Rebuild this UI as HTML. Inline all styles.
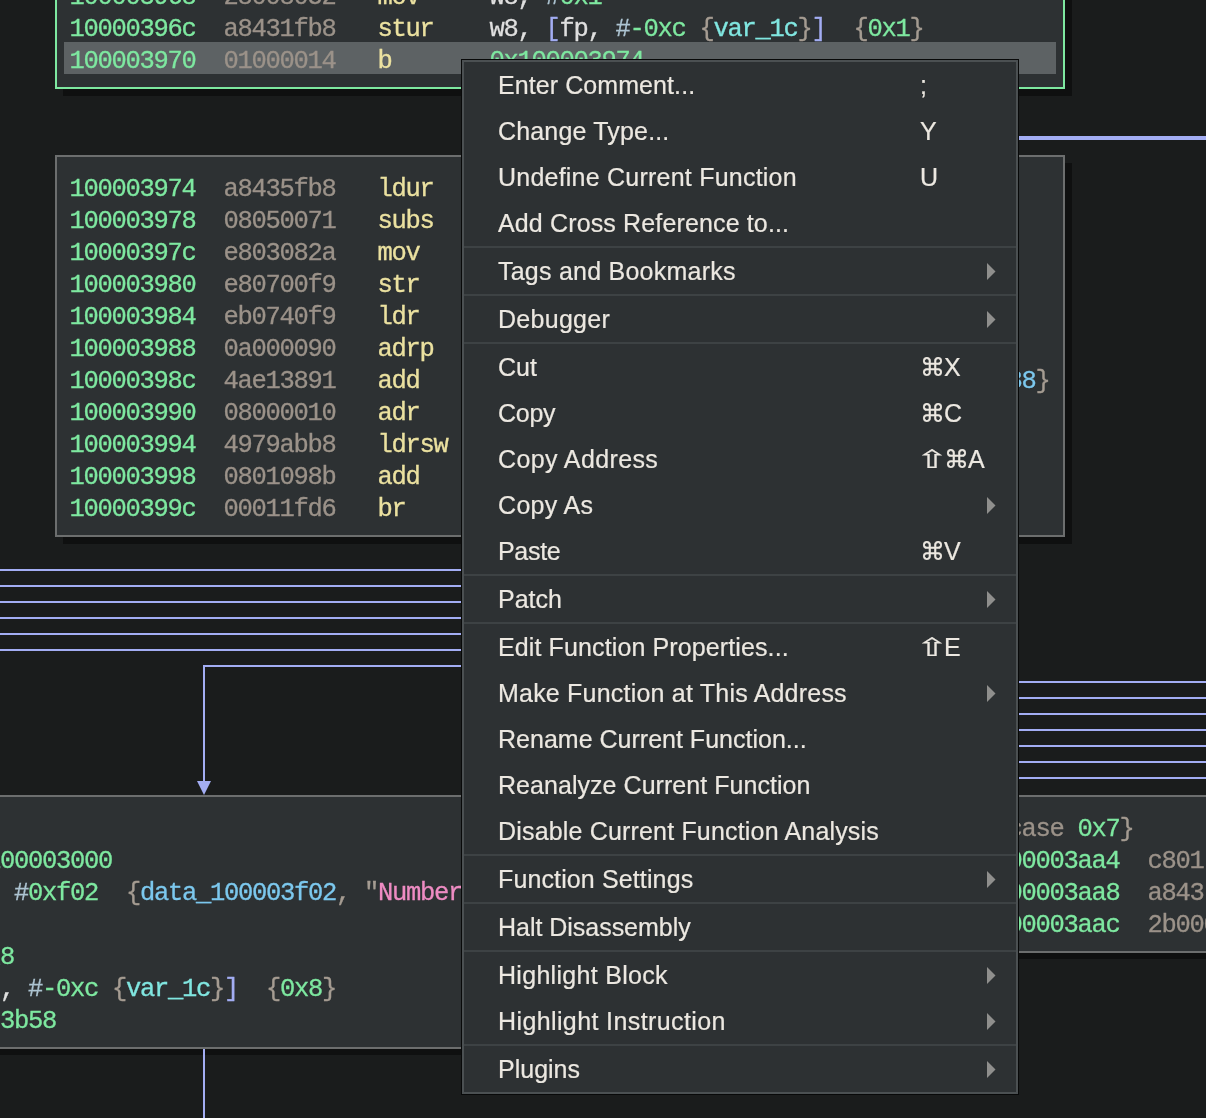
<!DOCTYPE html>
<html lang="en"><head><meta charset="utf-8"><title>Binary Ninja</title>
<style>
*{margin:0;padding:0;box-sizing:border-box}
html,body{width:1206px;height:1118px;overflow:hidden;background:#1a1c1c}
#root{will-change:transform;position:relative;width:1206px;height:1118px;overflow:hidden;background:#1a1c1c}
.node{position:absolute;z-index:2;background:#2d3133;border:2px solid #6c6e6e}
.shadow{position:absolute;z-index:0;background:#0f1010}
.hl{position:absolute;z-index:2;background:#5d6264}
.e{position:absolute;z-index:1;background:#a3adf3}
.ah{position:absolute;z-index:1}
.m{position:absolute;z-index:2;font-family:"Liberation Mono",monospace;font-size:25.5px;letter-spacing:-1.3025px;line-height:32px;height:32px;white-space:pre;padding-top:2.5px;-webkit-text-stroke:0.3px currentColor}
#menu{position:absolute;z-index:3;left:461px;top:59px;width:558px;box-sizing:content-box;width:552px;border:2px solid #4b5052;outline:1px solid #080909;background:#2d3133;left:462px;top:60px;overflow:hidden}
.mi{position:absolute;left:0;width:552px;height:46px;font-family:"Liberation Sans","DejaVu Sans",sans-serif;font-size:25px;color:#ece8e1;white-space:pre;-webkit-text-stroke:0.2px currentColor}
.lb{position:absolute;left:34px;top:0;line-height:46px;padding-top:0px}
.sc{position:absolute;left:456px;top:0;line-height:46px;padding-top:0px;letter-spacing:-1px}
.sh{display:inline-block;width:24px;text-align:center;letter-spacing:0;transform:scaleX(1.6)}
.ar{position:absolute;left:523px;top:14.5px;fill:#8f8f8d}
.sep{position:absolute;left:0;width:552px;height:2px;background:#3d4244}
</style></head>
<body><div id="root">
<div class="e" style="left:1010px;top:136px;width:196px;height:4px"></div><div class="e" style="left:0px;top:569px;width:470px;height:2px"></div><div class="e" style="left:0px;top:585px;width:470px;height:2px"></div><div class="e" style="left:0px;top:601px;width:470px;height:2px"></div><div class="e" style="left:0px;top:617px;width:470px;height:2px"></div><div class="e" style="left:0px;top:633px;width:470px;height:2px"></div><div class="e" style="left:0px;top:649px;width:470px;height:2px"></div><div class="e" style="left:203px;top:665px;width:267px;height:2px"></div><div class="e" style="left:203px;top:665px;width:2px;height:117px"></div><div class="e" style="left:1010px;top:681px;width:196px;height:2px"></div><div class="e" style="left:1010px;top:697px;width:196px;height:2px"></div><div class="e" style="left:1010px;top:713px;width:196px;height:2px"></div><div class="e" style="left:1010px;top:729px;width:196px;height:2px"></div><div class="e" style="left:1010px;top:745px;width:196px;height:2px"></div><div class="e" style="left:1010px;top:761px;width:196px;height:2px"></div><div class="e" style="left:1010px;top:777px;width:196px;height:2px"></div><div class="e" style="left:203px;top:1047px;width:2px;height:71px"></div><svg class="ah" style="left:196px;top:780px" width="16" height="16" viewBox="0 0 16 16"><polygon points="1,1 15,1 8,15" fill="#a3adf3"/></svg>
<div class="shadow" style="left:63px;top:-40px;width:1009px;height:136px"></div>
<div class="node" style="left:55px;top:-60px;width:1010px;height:148.5px;border-color:#7ee8a0"></div>
<div class="hl" style="left:64px;top:42px;width:992px;height:32px"></div><span class="m" style="left:69.50px;top:-21px;color:#7ee8a0">100003968</span><span class="m" style="left:223.50px;top:-21px;color:#9b9289">28008052</span><span class="m" style="left:377.50px;top:-21px;color:#ebe1a0">mov</span><span class="m" style="left:489.50px;top:-21px;color:#dfdfdf">w8,</span><span class="m" style="left:545.50px;top:-21px;color:#adc4d2">#</span><span class="m" style="left:559.50px;top:-21px;color:#7ee8a0">0x1</span><span class="m" style="left:69.50px;top:11px;color:#7ee8a0">10000396c</span><span class="m" style="left:223.50px;top:11px;color:#9b9289">a8431fb8</span><span class="m" style="left:377.50px;top:11px;color:#ebe1a0">stur</span><span class="m" style="left:489.50px;top:11px;color:#dfdfdf">w8,</span><span class="m" style="left:545.50px;top:11px;color:#a3adf3">[</span><span class="m" style="left:559.50px;top:11px;color:#dfdfdf">fp,</span><span class="m" style="left:615.50px;top:11px;color:#adc4d2">#</span><span class="m" style="left:629.50px;top:11px;color:#7ee8a0">-0xc</span><span class="m" style="left:699.50px;top:11px;color:#a59c92">{</span><span class="m" style="left:713.50px;top:11px;color:#80e6e0">var_1c</span><span class="m" style="left:797.50px;top:11px;color:#a59c92">}</span><span class="m" style="left:811.50px;top:11px;color:#a3adf3">]</span><span class="m" style="left:853.50px;top:11px;color:#a59c92">{</span><span class="m" style="left:867.50px;top:11px;color:#7ee8a0">0x1</span><span class="m" style="left:909.50px;top:11px;color:#a59c92">}</span><span class="m" style="left:69.50px;top:43px;color:#7ee8a0">100003970</span><span class="m" style="left:223.50px;top:43px;color:#9b9289">01000014</span><span class="m" style="left:377.50px;top:43px;color:#ebe1a0">b</span><span class="m" style="left:489.50px;top:43px;color:#7ee8a0">0x100003974</span>
<div class="shadow" style="left:63px;top:163px;width:1009px;height:381px"></div>
<div class="node" style="left:55px;top:155px;width:1010px;height:382px"></div>
<span class="m" style="left:69.50px;top:171px;color:#7ee8a0">100003974</span><span class="m" style="left:223.50px;top:171px;color:#9b9289">a8435fb8</span><span class="m" style="left:377.50px;top:171px;color:#ebe1a0">ldur</span><span class="m" style="left:489.50px;top:171px;color:#dfdfdf">w8,</span><span class="m" style="left:545.50px;top:171px;color:#a3adf3">[</span><span class="m" style="left:559.50px;top:171px;color:#dfdfdf">fp,</span><span class="m" style="left:615.50px;top:171px;color:#adc4d2">#</span><span class="m" style="left:629.50px;top:171px;color:#7ee8a0">-0xc</span><span class="m" style="left:699.50px;top:171px;color:#a59c92">{</span><span class="m" style="left:713.50px;top:171px;color:#80e6e0">var_1c</span><span class="m" style="left:797.50px;top:171px;color:#a59c92">}</span><span class="m" style="left:811.50px;top:171px;color:#a3adf3">]</span><span class="m" style="left:69.50px;top:203px;color:#7ee8a0">100003978</span><span class="m" style="left:223.50px;top:203px;color:#9b9289">08050071</span><span class="m" style="left:377.50px;top:203px;color:#ebe1a0">subs</span><span class="m" style="left:489.50px;top:203px;color:#dfdfdf">w8,</span><span class="m" style="left:545.50px;top:203px;color:#dfdfdf">w8,</span><span class="m" style="left:601.50px;top:203px;color:#adc4d2">#</span><span class="m" style="left:615.50px;top:203px;color:#7ee8a0">0x1</span><span class="m" style="left:69.50px;top:235px;color:#7ee8a0">10000397c</span><span class="m" style="left:223.50px;top:235px;color:#9b9289">e803082a</span><span class="m" style="left:377.50px;top:235px;color:#ebe1a0">mov</span><span class="m" style="left:489.50px;top:235px;color:#dfdfdf">w8,</span><span class="m" style="left:545.50px;top:235px;color:#dfdfdf">w8</span><span class="m" style="left:69.50px;top:267px;color:#7ee8a0">100003980</span><span class="m" style="left:223.50px;top:267px;color:#9b9289">e80700f9</span><span class="m" style="left:377.50px;top:267px;color:#ebe1a0">str</span><span class="m" style="left:489.50px;top:267px;color:#dfdfdf">x8,</span><span class="m" style="left:545.50px;top:267px;color:#a3adf3">[</span><span class="m" style="left:559.50px;top:267px;color:#dfdfdf">sp,</span><span class="m" style="left:615.50px;top:267px;color:#adc4d2">#</span><span class="m" style="left:629.50px;top:267px;color:#7ee8a0">0x8</span><span class="m" style="left:685.50px;top:267px;color:#a59c92">{</span><span class="m" style="left:699.50px;top:267px;color:#80e6e0">var_38</span><span class="m" style="left:783.50px;top:267px;color:#a59c92">}</span><span class="m" style="left:797.50px;top:267px;color:#a3adf3">]</span><span class="m" style="left:69.50px;top:299px;color:#7ee8a0">100003984</span><span class="m" style="left:223.50px;top:299px;color:#9b9289">eb0740f9</span><span class="m" style="left:377.50px;top:299px;color:#ebe1a0">ldr</span><span class="m" style="left:489.50px;top:299px;color:#dfdfdf">x11,</span><span class="m" style="left:559.50px;top:299px;color:#a3adf3">[</span><span class="m" style="left:573.50px;top:299px;color:#dfdfdf">sp,</span><span class="m" style="left:629.50px;top:299px;color:#adc4d2">#</span><span class="m" style="left:643.50px;top:299px;color:#7ee8a0">0x8</span><span class="m" style="left:699.50px;top:299px;color:#a59c92">{</span><span class="m" style="left:713.50px;top:299px;color:#80e6e0">var_38</span><span class="m" style="left:797.50px;top:299px;color:#a59c92">}</span><span class="m" style="left:811.50px;top:299px;color:#a3adf3">]</span><span class="m" style="left:69.50px;top:331px;color:#7ee8a0">100003988</span><span class="m" style="left:223.50px;top:331px;color:#9b9289">0a000090</span><span class="m" style="left:377.50px;top:331px;color:#ebe1a0">adrp</span><span class="m" style="left:489.50px;top:331px;color:#dfdfdf">x10,</span><span class="m" style="left:559.50px;top:331px;color:#7ee8a0">0x100003000</span><span class="m" style="left:69.50px;top:363px;color:#7ee8a0">10000398c</span><span class="m" style="left:223.50px;top:363px;color:#9b9289">4ae13891</span><span class="m" style="left:377.50px;top:363px;color:#ebe1a0">add</span><span class="m" style="left:489.50px;top:363px;color:#dfdfdf">x10,</span><span class="m" style="left:559.50px;top:363px;color:#dfdfdf">x10,</span><span class="m" style="left:629.50px;top:363px;color:#adc4d2">#</span><span class="m" style="left:643.50px;top:363px;color:#7ee8a0">0xf38</span><span class="m" style="left:741.50px;top:363px;color:#a59c92">{</span><span class="m" style="left:755.50px;top:363px;color:#7cc8ee">jump_table_100003f38</span><span class="m" style="left:1035.50px;top:363px;color:#a59c92">}</span><span class="m" style="left:69.50px;top:395px;color:#7ee8a0">100003990</span><span class="m" style="left:223.50px;top:395px;color:#9b9289">08000010</span><span class="m" style="left:377.50px;top:395px;color:#ebe1a0">adr</span><span class="m" style="left:489.50px;top:395px;color:#dfdfdf">x8,</span><span class="m" style="left:545.50px;top:395px;color:#7ee8a0">0x100003990</span><span class="m" style="left:69.50px;top:427px;color:#7ee8a0">100003994</span><span class="m" style="left:223.50px;top:427px;color:#9b9289">4979abb8</span><span class="m" style="left:377.50px;top:427px;color:#ebe1a0">ldrsw</span><span class="m" style="left:489.50px;top:427px;color:#dfdfdf">x9,</span><span class="m" style="left:545.50px;top:427px;color:#a3adf3">[</span><span class="m" style="left:559.50px;top:427px;color:#dfdfdf">x10,</span><span class="m" style="left:629.50px;top:427px;color:#dfdfdf">x11,</span><span class="m" style="left:699.50px;top:427px;color:#dfdfdf">lsl</span><span class="m" style="left:755.50px;top:427px;color:#adc4d2">#</span><span class="m" style="left:769.50px;top:427px;color:#7ee8a0">0x2</span><span class="m" style="left:811.50px;top:427px;color:#a3adf3">]</span><span class="m" style="left:69.50px;top:459px;color:#7ee8a0">100003998</span><span class="m" style="left:223.50px;top:459px;color:#9b9289">0801098b</span><span class="m" style="left:377.50px;top:459px;color:#ebe1a0">add</span><span class="m" style="left:489.50px;top:459px;color:#dfdfdf">x8,</span><span class="m" style="left:545.50px;top:459px;color:#dfdfdf">x8,</span><span class="m" style="left:601.50px;top:459px;color:#dfdfdf">x9</span><span class="m" style="left:69.50px;top:491px;color:#7ee8a0">10000399c</span><span class="m" style="left:223.50px;top:491px;color:#9b9289">00011fd6</span><span class="m" style="left:377.50px;top:491px;color:#ebe1a0">br</span><span class="m" style="left:489.50px;top:491px;color:#dfdfdf">x8</span>
<div class="shadow" style="left:-20px;top:803px;width:520px;height:252px"></div>
<div class="node" style="left:-20px;top:795px;width:520px;height:254px"></div>
<span class="m" style="left:-98.05px;top:843px;color:#dfdfdf">x0,</span><span class="m" style="left:-42.05px;top:843px;color:#7ee8a0">0x100003000</span><span class="m" style="left:-98.05px;top:875px;color:#dfdfdf">x0,</span><span class="m" style="left:-42.05px;top:875px;color:#dfdfdf">x0,</span><span class="m" style="left:13.95px;top:875px;color:#adc4d2">#</span><span class="m" style="left:27.95px;top:875px;color:#7ee8a0">0xf02</span><span class="m" style="left:125.95px;top:875px;color:#a59c92">{</span><span class="m" style="left:139.95px;top:875px;color:#7cc8ee">data_100003f02</span><span class="m" style="left:335.95px;top:875px;color:#a59c92">,</span><span class="m" style="left:363.95px;top:875px;color:#a59c92">"</span><span class="m" style="left:377.95px;top:875px;color:#ee8cc3">Number is 8</span><span class="m" style="left:531.95px;top:875px;color:#a59c92">"</span><span class="m" style="left:545.95px;top:875px;color:#a59c92">}</span><span class="m" style="left:-98.05px;top:907px;color:#7cc8ee">_printf</span><span class="m" style="left:-98.05px;top:939px;color:#dfdfdf">w8,</span><span class="m" style="left:-42.05px;top:939px;color:#adc4d2">#</span><span class="m" style="left:-28.05px;top:939px;color:#7ee8a0">0x8</span><span class="m" style="left:-98.05px;top:971px;color:#dfdfdf">w8,</span><span class="m" style="left:-42.05px;top:971px;color:#a3adf3">[</span><span class="m" style="left:-28.05px;top:971px;color:#dfdfdf">fp,</span><span class="m" style="left:27.95px;top:971px;color:#adc4d2">#</span><span class="m" style="left:41.95px;top:971px;color:#7ee8a0">-0xc</span><span class="m" style="left:111.95px;top:971px;color:#a59c92">{</span><span class="m" style="left:125.95px;top:971px;color:#80e6e0">var_1c</span><span class="m" style="left:209.95px;top:971px;color:#a59c92">}</span><span class="m" style="left:223.95px;top:971px;color:#a3adf3">]</span><span class="m" style="left:265.95px;top:971px;color:#a59c92">{</span><span class="m" style="left:279.95px;top:971px;color:#7ee8a0">0x8</span><span class="m" style="left:321.95px;top:971px;color:#a59c92">}</span><span class="m" style="left:-98.05px;top:1003px;color:#7ee8a0">0x100003b58</span>
<div class="shadow" style="left:986px;top:803px;width:300px;height:156px"></div>
<div class="node" style="left:978px;top:795px;width:300px;height:158px"></div>
<span class="m" style="left:993.60px;top:811px;color:#a59c92">{</span><span class="m" style="left:1007.60px;top:811px;color:#9b9289">case</span><span class="m" style="left:1077.60px;top:811px;color:#7ee8a0">0x7</span><span class="m" style="left:1119.60px;top:811px;color:#a59c92">}</span><span class="m" style="left:993.60px;top:843px;color:#7ee8a0">100003aa4</span><span class="m" style="left:1147.60px;top:843px;color:#9b9289">c801</span><span class="m" style="left:993.60px;top:875px;color:#7ee8a0">100003aa8</span><span class="m" style="left:1147.60px;top:875px;color:#9b9289">a843</span><span class="m" style="left:993.60px;top:907px;color:#7ee8a0">100003aac</span><span class="m" style="left:1147.60px;top:907px;color:#9b9289">2b000014</span>
<div id="menu" style="height:1030px"><div class="mi" style="top:0px"><span class="lb" style="letter-spacing:0.080px">Enter Comment...</span><span class="sc">;</span></div><div class="mi" style="top:46px"><span class="lb" style="letter-spacing:0.170px">Change Type...</span><span class="sc">Y</span></div><div class="mi" style="top:92px"><span class="lb" style="letter-spacing:0.225px">Undefine Current Function</span><span class="sc">U</span></div><div class="mi" style="top:138px"><span class="lb" style="letter-spacing:0.141px">Add Cross Reference to...</span></div><div class="sep" style="top:184px"></div><div class="mi" style="top:186px"><span class="lb" style="letter-spacing:0.235px">Tags and Bookmarks</span><svg class="ar" width="9" height="17" viewBox="0 0 9 17"><polygon points="0,0 8.5,8.5 0,17"/></svg></div><div class="sep" style="top:232px"></div><div class="mi" style="top:234px"><span class="lb" style="letter-spacing:0.286px">Debugger</span><svg class="ar" width="9" height="17" viewBox="0 0 9 17"><polygon points="0,0 8.5,8.5 0,17"/></svg></div><div class="sep" style="top:280px"></div><div class="mi" style="top:282px"><span class="lb" style="letter-spacing:0.000px">Cut</span><span class="sc">⌘X</span></div><div class="mi" style="top:328px"><span class="lb" style="letter-spacing:-0.266px">Copy</span><span class="sc">⌘C</span></div><div class="mi" style="top:374px"><span class="lb" style="letter-spacing:0.382px">Copy Address</span><span class="sc"><span class="sh">⇧</span>⌘A</span></div><div class="mi" style="top:420px"><span class="lb" style="letter-spacing:0.333px">Copy As</span><svg class="ar" width="9" height="17" viewBox="0 0 9 17"><polygon points="0,0 8.5,8.5 0,17"/></svg></div><div class="mi" style="top:466px"><span class="lb" style="letter-spacing:-0.300px">Paste</span><span class="sc">⌘V</span></div><div class="sep" style="top:512px"></div><div class="mi" style="top:514px"><span class="lb" style="letter-spacing:0.000px">Patch</span><svg class="ar" width="9" height="17" viewBox="0 0 9 17"><polygon points="0,0 8.5,8.5 0,17"/></svg></div><div class="sep" style="top:560px"></div><div class="mi" style="top:562px"><span class="lb" style="letter-spacing:0.116px">Edit Function Properties...</span><span class="sc"><span class="sh">⇧</span>E</span></div><div class="mi" style="top:608px"><span class="lb" style="letter-spacing:0.208px">Make Function at This Address</span><svg class="ar" width="9" height="17" viewBox="0 0 9 17"><polygon points="0,0 8.5,8.5 0,17"/></svg></div><div class="mi" style="top:654px"><span class="lb" style="letter-spacing:0.008px">Rename Current Function...</span></div><div class="mi" style="top:700px"><span class="lb" style="letter-spacing:0.048px">Reanalyze Current Function</span></div><div class="mi" style="top:746px"><span class="lb" style="letter-spacing:0.175px">Disable Current Function Analysis</span></div><div class="sep" style="top:792px"></div><div class="mi" style="top:794px"><span class="lb" style="letter-spacing:0.125px">Function Settings</span><svg class="ar" width="9" height="17" viewBox="0 0 9 17"><polygon points="0,0 8.5,8.5 0,17"/></svg></div><div class="sep" style="top:840px"></div><div class="mi" style="top:842px"><span class="lb" style="letter-spacing:-0.027px">Halt Disassembly</span></div><div class="sep" style="top:888px"></div><div class="mi" style="top:890px"><span class="lb" style="letter-spacing:0.300px">Highlight Block</span><svg class="ar" width="9" height="17" viewBox="0 0 9 17"><polygon points="0,0 8.5,8.5 0,17"/></svg></div><div class="mi" style="top:936px"><span class="lb" style="letter-spacing:0.390px">Highlight Instruction</span><svg class="ar" width="9" height="17" viewBox="0 0 9 17"><polygon points="0,0 8.5,8.5 0,17"/></svg></div><div class="sep" style="top:982px"></div><div class="mi" style="top:984px"><span class="lb" style="letter-spacing:0.000px">Plugins</span><svg class="ar" width="9" height="17" viewBox="0 0 9 17"><polygon points="0,0 8.5,8.5 0,17"/></svg></div></div>
</div></body></html>
